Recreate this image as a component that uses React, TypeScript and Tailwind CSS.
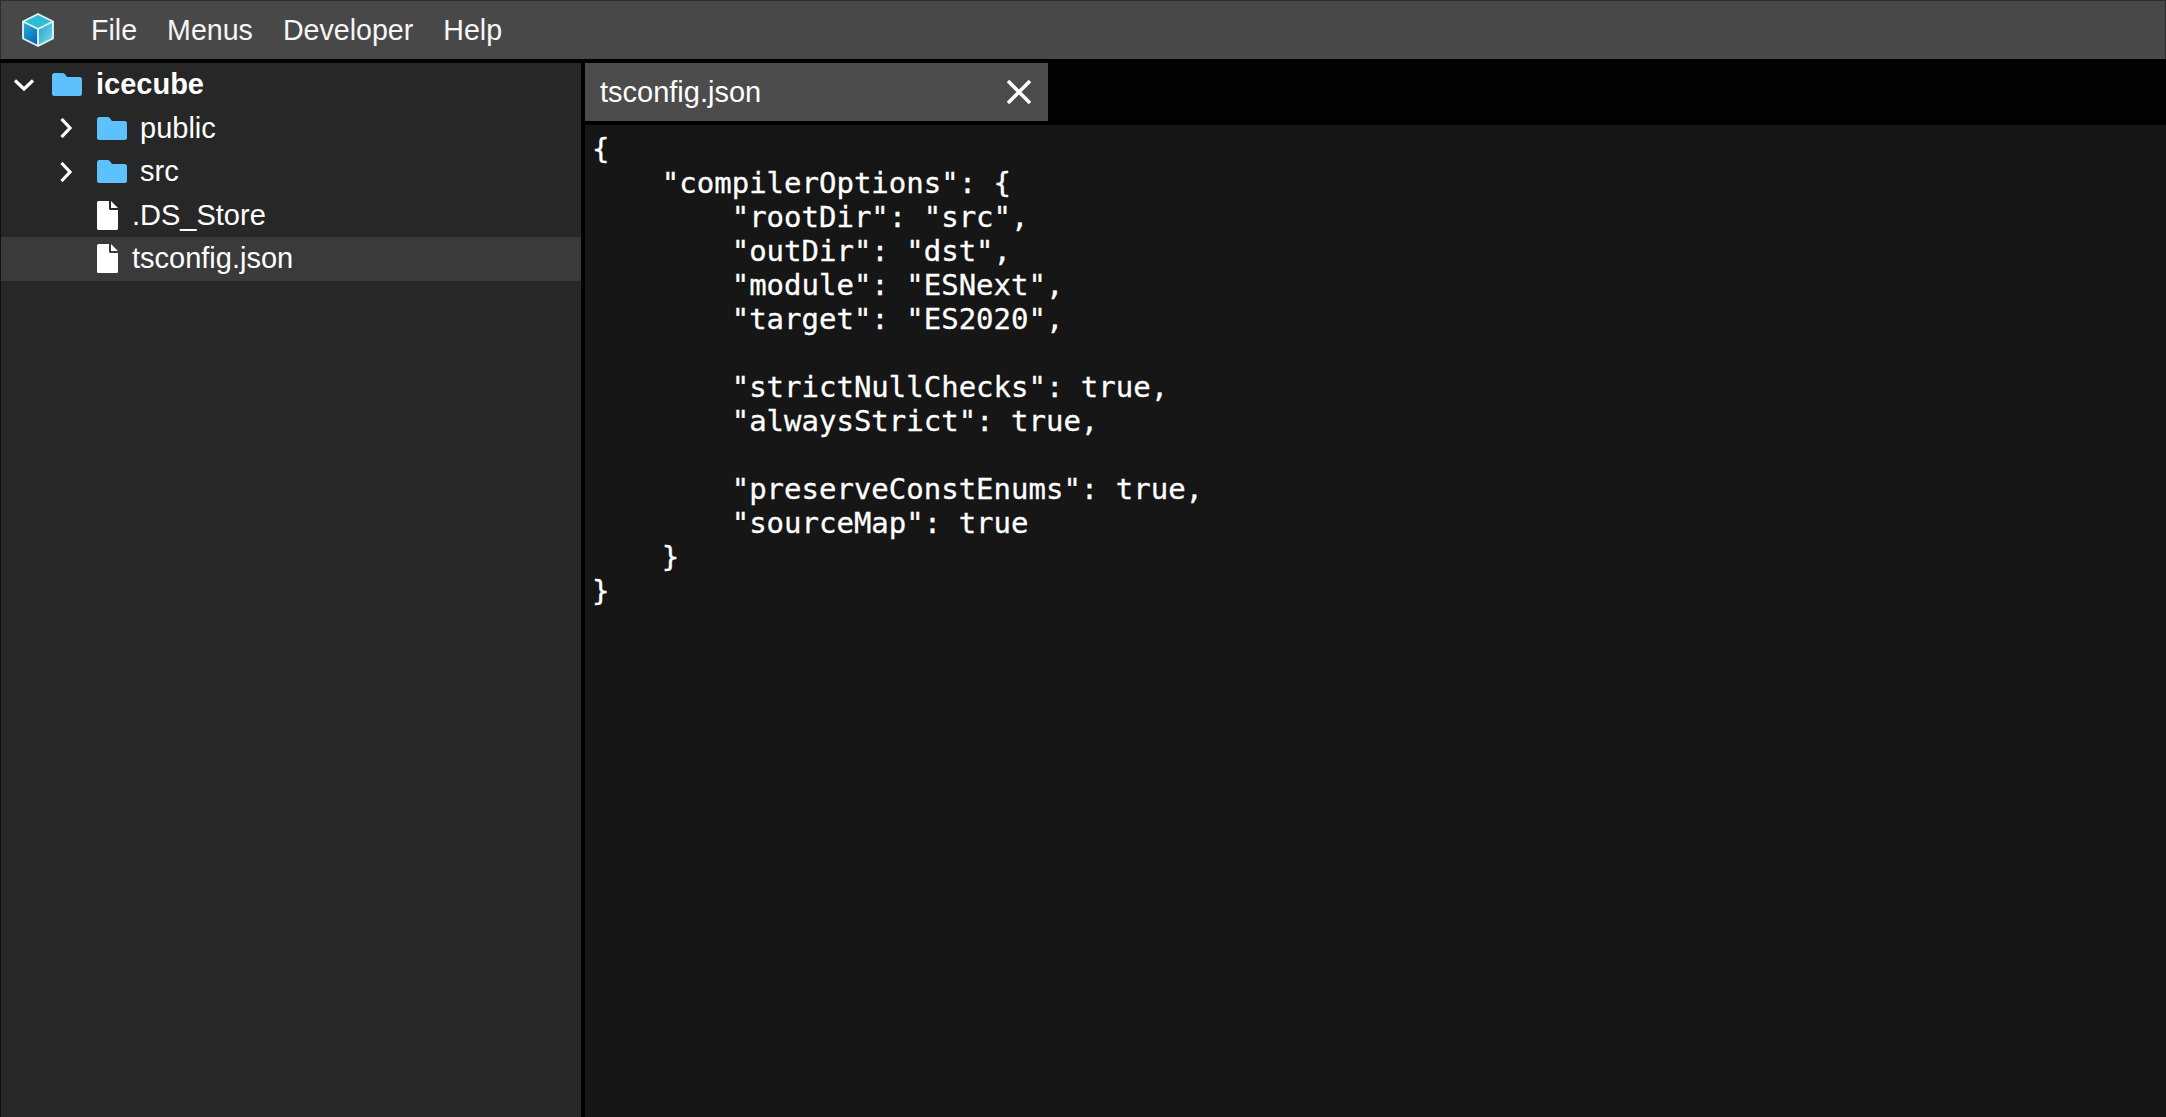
import { useId } from "react";

const code = `{
    "compilerOptions": {
        "rootDir": "src",
        "outDir": "dst",
        "module": "ESNext",
        "target": "ES2020",

        "strictNullChecks": true,
        "alwaysStrict": true,

        "preserveConstEnums": true,
        "sourceMap": true
    }
}`;

const CubeLogo = () => {
  const id = useId();
  return (
    <svg width="36" height="36" viewBox="0 0 36 36" className="shrink-0">
      <defs>
        <linearGradient id={`${id}l`} x1="0.1" y1="0" x2="0.7" y2="1">
          <stop offset="0" stopColor="#26b2d4" />
          <stop offset="1" stopColor="#0765b8" />
        </linearGradient>
        <linearGradient id={`${id}r`} x1="0" y1="0" x2="1" y2="1">
          <stop offset="0" stopColor="#1f9fcb" />
          <stop offset="1" stopColor="#7fdfea" />
        </linearGradient>
      </defs>
      <path d="M3 9.5 18 2l15 7.5L18 17z" fill="#2cbcd4" />
      <path d="M3 9.5 18 17v17L3 26.5z" fill={`url(#${id}l)`} />
      <path d="M33 9.5 18 17v17l15-7.5z" fill={`url(#${id}r)`} />
      <path
        d="M18 2 33 9.5v17L18 34 3 26.5v-17zM3 9.5 18 17l15-7.5M18 17v17"
        fill="none"
        stroke="#e2f8fc"
        strokeWidth="1.8"
        strokeLinejoin="round"
      />
    </svg>
  );
};

const Chevron = ({ open }: { open?: boolean }) => (
  <svg width="20" height="20" viewBox="0 0 20 20" className="shrink-0">
    <path
      d={open ? "M1 5.5 10 14l9-8.5" : "M5.5 1 14 10l-8.5 9"}
      fill="none"
      stroke="#fff"
      strokeWidth="3.2"
    />
  </svg>
);

const Folder = () => (
  <svg width="30" height="23" viewBox="0 0 30 23" className="shrink-0">
    <path
      d="M2.5 0h8c1 0 1.7.4 2.3 1.1L15 4h12.5A2.5 2.5 0 0 1 30 6.5v14a2.5 2.5 0 0 1-2.5 2.5h-25A2.5 2.5 0 0 1 0 20.5v-18A2.5 2.5 0 0 1 2.5 0z"
      fill="#5cc1fd"
    />
  </svg>
);

const FileIcon = () => (
  <svg width="21" height="29" viewBox="0 0 21 29" className="shrink-0">
    <path
      d="M1.5 0H12v7.5A1.5 1.5 0 0 0 13.5 9H21v18.5a1.5 1.5 0 0 1-1.5 1.5h-18A1.5 1.5 0 0 1 0 27.5v-26A1.5 1.5 0 0 1 1.5 0zM14 0l7 7h-7z"
      fill="#fff"
    />
  </svg>
);

export default function App() {
  return (
    <div className="flex h-screen w-full flex-col overflow-hidden bg-black font-['Liberation_Sans',Arial,sans-serif] text-[29px] text-white">
      <header className="flex h-[59px] shrink-0 items-center border border-b-0 border-[#2c2c2c] bg-[#484848] pl-[19px]">
        <CubeLogo />
        <nav className="ml-[35px] flex gap-[30px] text-[28.6px] text-[#f6f6f6]">
          <span>File</span>
          <span>Menus</span>
          <span>Developer</span>
          <span>Help</span>
        </nav>
      </header>

      <div className="mt-[4px] flex min-h-0 flex-1 gap-[4px]">
        <aside className="w-[581px] shrink-0 border-l border-[#111] bg-[#272727]">
          <div className="flex h-[43.5px] items-center pl-[13px]">
            <Chevron open />
            <span className="ml-[18px]">
              <Folder />
            </span>
            <span className="ml-[14px] font-bold">icecube</span>
          </div>
          <div className="flex h-[43.5px] items-center pl-[55px]">
            <Chevron />
            <span className="ml-[21px]">
              <Folder />
            </span>
            <span className="ml-[13px]">public</span>
          </div>
          <div className="flex h-[43.5px] items-center pl-[55px]">
            <Chevron />
            <span className="ml-[21px]">
              <Folder />
            </span>
            <span className="ml-[13px]">src</span>
          </div>
          <div className="flex h-[43.5px] items-center pl-[96px]">
            <FileIcon />
            <span className="ml-[14px]">.DS_Store</span>
          </div>
          <div className="flex h-[43.5px] items-center bg-[#3a3a3a] pl-[96px]">
            <FileIcon />
            <span className="ml-[14px]">tsconfig.json</span>
          </div>
        </aside>

        <main className="flex min-w-0 flex-1 flex-col">
          <div className="flex h-[58px] shrink-0 bg-[#030303]">
            <div className="flex w-[463px] items-center justify-between bg-[#4c4c4c] pl-[15px] pr-[17px] pt-[2px]">
              <span>tsconfig.json</span>
              <svg width="24" height="24" viewBox="0 0 24 24" className="-mt-[2px]">
                <path d="M1 1l22 22M23 1 1 23" stroke="#fff" strokeWidth="3.6" />
              </svg>
            </div>
          </div>
          <pre className="mt-[4px] flex-1 bg-[#161616] pl-[7px] pt-[7px] font-['DejaVu_Sans_Mono',monospace] text-[29px] leading-[34px] text-white [-webkit-text-stroke:0.3px_white]">
            {code}
          </pre>
        </main>
      </div>
    </div>
  );
}
